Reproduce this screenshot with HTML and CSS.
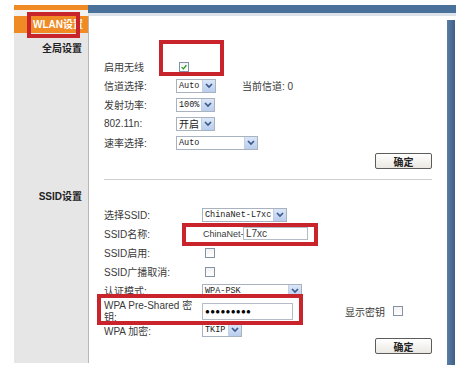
FILE: index.html
```html
<!DOCTYPE html>
<html>
<head>
  <title>WLAN设置</title>
  <link rel="stylesheet" href="styles.css">
</head>
<body>

<div class="page">
  <div class="side">
    <div class="side-top"></div>
    <div class="side-gap"></div>
    <div class="tab">WLAN设置</div>
    <div class="side-title first">全局设置</div>
    <div class="side-title second">SSID设置</div>
  </div>

  <div class="main">
    <div class="topbar"></div>
    <div class="topline"></div>
    <div class="body">
      <div class="content">

        <!-- global settings -->
        <div class="section global">
          <div class="row">
            <span class="label">启用无线</span>
            <span class="check on"><svg viewBox="0 0 10 10"><path d="M2 5.2 L4.2 7.4 L8 2.8"/></svg></span>
          </div>
          <div class="row">
            <span class="label">信道选择:</span>
            <span class="select w40"><span class="val">Auto</span><span class="arrow"><svg viewBox="0 0 12 11"><path d="M3 4 L6 7 L9 4"/></svg></span></span>
            <span class="note">当前信道: 0</span>
          </div>
          <div class="row">
            <span class="label">发射功率:</span>
            <span class="select w39"><span class="val">100%</span><span class="arrow"><svg viewBox="0 0 12 11"><path d="M3 4 L6 7 L9 4"/></svg></span></span>
          </div>
          <div class="row">
            <span class="label">802.11n:</span>
            <span class="select w39"><span class="val cn">开启</span><span class="arrow"><svg viewBox="0 0 12 11"><path d="M3 4 L6 7 L9 4"/></svg></span></span>
          </div>
          <div class="row">
            <span class="label">速率选择:</span>
            <span class="select w82"><span class="val">Auto</span><span class="arrow"><svg viewBox="0 0 12 11"><path d="M3 4 L6 7 L9 4"/></svg></span></span>
          </div>
          <div class="actions first-btn">
            <button class="btn">确定</button>
          </div>
        </div>

        <div class="divider"></div>

        <!-- ssid settings -->
        <div class="section ssid">
          <div class="row">
            <span class="label">选择SSID:</span>
            <span class="select w85"><span class="val">ChinaNet-L7xc</span><span class="arrow"><svg viewBox="0 0 12 11"><path d="M3 4 L6 7 L9 4"/></svg></span></span>
          </div>
          <div class="row">
            <span class="label">SSID名称:</span>
            <span class="prefix">ChinaNet-</span>
            <span class="text-input name">L7xc</span>
          </div>
          <div class="row">
            <span class="label">SSID启用:</span>
            <span class="check"></span>
          </div>
          <div class="row">
            <span class="label">SSID广播取消:</span>
            <span class="check"></span>
          </div>
          <div class="row">
            <span class="label">认证模式:</span>
            <span class="select w100"><span class="val">WPA-PSK</span><span class="arrow"><svg viewBox="0 0 12 11"><path d="M3 4 L6 7 L9 4"/></svg></span></span>
          </div>
          <div class="row psk">
            <span class="label two">WPA Pre-Shared 密<br>钥:</span>
            <span class="text-input pass">●●●●●●●●●</span>
            <span class="note show">显示密钥</span>
            <span class="check"></span>
          </div>
          <div class="row last">
            <span class="label">WPA 加密:</span>
            <span class="select w40"><span class="val">TKIP</span><span class="arrow"><svg viewBox="0 0 12 11"><path d="M3 4 L6 7 L9 4"/></svg></span></span>
          </div>
          <div class="actions">
            <button class="btn">确定</button>
          </div>
        </div>

      </div>
      <div class="rightbar"></div>
    </div>
  </div>

  <!-- red annotation boxes -->
  <div class="mark mark-tab"></div>
  <div class="mark mark-enable"></div>
  <div class="mark mark-name"></div>
  <div class="mark mark-psk"></div>
</div>

</body>
</html>
```

FILE: styles.css
```css
body { margin: 0; background: #fff; color: #3a3a3a; font-family: "Liberation Sans", "Noto Sans CJK SC", sans-serif; font-size: 10px; }
.page { position: relative; display: flex; padding: 5px 0 0 14px; height: 369px; }

.side { width: 74px; height: 358px; background: #e6e6e6; border-right: 1px solid #b8b8b8; display: flex; flex-direction: column; }
.side-top { height: 5px; background: #ef8a24; }
.side-gap { height: 6px; background: #f2f2f2; }
.tab { height: 17px; line-height: 17px; background: #ef8a24; color: #fff; font-weight: bold; padding-left: 19px; white-space: nowrap; overflow: hidden; }
.side-title { text-align: right; padding-right: 6px; font-weight: bold; line-height: 14px; color: #222; }
.side-title.first { margin-top: 9px; }
.side-title.second { margin-top: 134px; }

.main { flex: 1; display: flex; flex-direction: column; margin-left: -1px; }
.topbar { height: 8px; background: #4a7199; }
.topline { height: 3px; background: #dde3ea; }
.body { display: flex; flex: 1; }
.content { flex: 1; padding: 0 15px 0 16px; }
.rightbar { width: 8px; margin: 4px 1px 0 0; height: 345px; background: linear-gradient(90deg, #5a7ea6, #3d5f88); }

.section.global { margin-top: 41px; }
.section.ssid { margin-top: 25px; }
.row { display: flex; align-items: center; height: 19px; }
.label { flex: none; white-space: nowrap; }
.global .label { width: 72px; }
.ssid .label { width: 98px; }
.label.two { line-height: 12px; align-self: flex-start; }
.row.psk { height: 22px; }
.row.last { height: 16px; }

.note { margin-left: 26px; }
.note.show { margin-left: 52px; }
.prefix { margin-left: 1px; width: 40px; font-size: 9px; white-space: nowrap; }

.select { display: flex; align-items: center; height: 14px; box-sizing: border-box; border: 1px solid #a9b3c0; background: #fff; font-family: "Liberation Mono", "Noto Sans CJK SC", monospace; font-size: 8.5px; color: #222; }
.select .val { flex: 1; padding-left: 2px; white-space: nowrap; overflow: hidden; }
.select .val.cn { font-family: "Noto Sans CJK SC", sans-serif; font-size: 10px; }
.select .arrow { flex: none; width: 12px; height: 12px; background: linear-gradient(#dbe6f8, #b9cdee); border-left: 1px solid #c3d0e4; display: flex; }
.select .arrow svg { width: 12px; height: 11px; }
.select .arrow path { fill: none; stroke: #3d5a8a; stroke-width: 1.7; }
.w39 { width: 39px; }
.w40 { width: 40px; }
.w82 { width: 82px; }
.w85 { width: 85px; }
.w100 { width: 100px; }

.check { width: 10px; height: 10px; box-sizing: border-box; border: 1px solid #8393a5; background: linear-gradient(#f2f2f2, #fff); margin-left: 3px; display: flex; }
.check svg { width: 8px; height: 8px; }
.check path { fill: none; stroke: #229a22; stroke-width: 1.6; }
.note.show + .check { margin-left: 8px; }

.text-input { height: 13px; box-sizing: border-box; border: 1px solid #b4bcc6; line-height: 11px; padding-left: 2px; background: #fff; }
.text-input.name { width: 65px; }
.text-input.pass { width: 91px; height: 17px; line-height: 15px; font-size: 8px; letter-spacing: 0.3px; color: #000; }

.actions { display: flex; justify-content: flex-end; }
.actions.first-btn { margin-top: 1px; }
.btn { width: 57px; height: 16px; padding: 0; border: 1px solid #5c5c5c; border-radius: 2px; background: linear-gradient(#fff, #ebe8e2); font-family: "Noto Sans CJK SC", sans-serif; font-size: 10px; font-weight: bold; color: #222; }

.divider { height: 1px; background: #cfcfcf; margin-top: 10px; }

.mark { position: absolute; border: 4px solid #c9232b; box-sizing: border-box; }
.mark-tab { left: 27px; top: 12px; width: 53px; height: 26px; }
.mark-enable { left: 159px; top: 40px; width: 65px; height: 36px; }
.mark-name { left: 182px; top: 223px; width: 136px; height: 23px; }
.mark-psk { left: 97px; top: 294px; width: 206px; height: 31px; }
```
